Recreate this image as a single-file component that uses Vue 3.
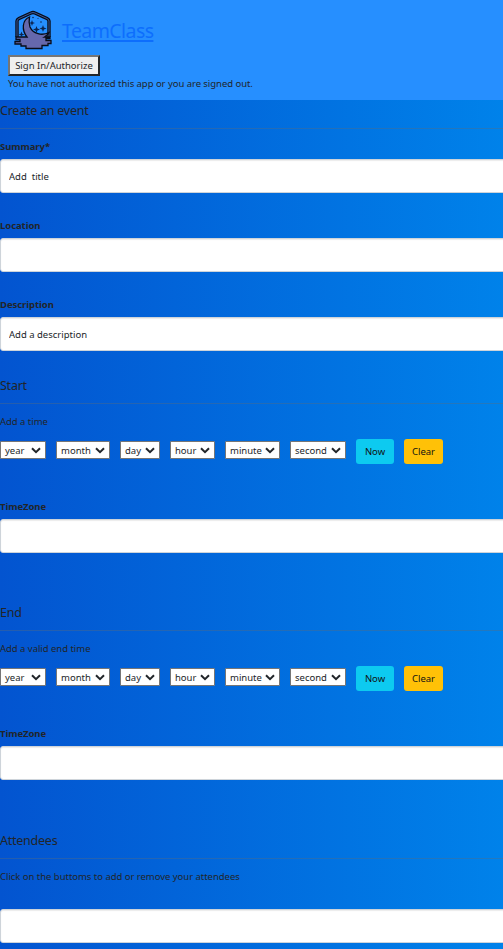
<script setup>
const parts = [
  { name: 'year', w: 46 },
  { name: 'month', w: 54 },
  { name: 'day', w: 40 },
  { name: 'hour', w: 45 },
  { name: 'minute', w: 55 },
  { name: 'second', w: 56 },
]
const times = [
  { title: 'Start', hint: 'Add a time' },
  { title: 'End', hint: 'Add a valid end time' },
]
const fields = [
  { label: 'Summary*', value: 'Add  title' },
  { label: 'Location', value: '' },
  { label: 'Description', value: 'Add a description' },
]
</script>

<template>
  <div class="page">
    <header class="top">
      <div class="brand">
        <svg class="logo" viewBox="0 0 50 50" width="50" height="50">
          <path d="M9 32V16Q9 14.500 11 13.500L23 8Q25 7 27 8L39 13.500Q41 14.500 41 16V32" fill="none" stroke="#080c18" stroke-width="3.400" />
          <path d="M9 32V16Q9 14.500 11 13.500L23 8Q25 7 27 8L39 13.500Q41 14.500 41 16V32" fill="none" stroke="#4a6cb8" stroke-width=".8" />
          <path d="M21.500 12C14 15 13.500 25 19 32H8V34.500H12V36.500H7V39H13V41H18V43.500H34V40.500H40V38.500H43V35.500H38V33.500H42V32H36.500Q40 30 41 27.500C34 31 25 29 22 22Q20.500 17 21.500 12Z" fill="#6668ac" stroke="#080c18" stroke-width="1.300" />
          <g fill="#0c2450">
            <path d="M24 15l.8 2.200 2.200.8-2.200.8L24 21l-.8-2.200L21 18l2.200-.8z" />
            <path d="M28.500 21l.9 2.600 2.600.9-2.600.9-.9 2.600-.9-2.600-2.600-.9 2.600-.9z" />
            <path d="M35 20l.9 2.600 2.600.9-2.600.9L35 27l-.9-2.600-2.600-.9 2.600-.9z" />
            <path d="M13.500 26.500l.8 2.200 2.200.8-2.200.8-.8 2.200-.8-2.200-2.200-.8 2.200-.8z" />
            <circle cx="25" cy="12.500" r=".8" /><circle cx="33" cy="17" r=".8" /><circle cx="30" cy="13.500" r=".5" />
          </g>
        </svg>
        <a class="name">TeamClass</a>
      </div>
      <button class="auth"><span>Sign In/Authorize</span></button>
      <p class="status"><span>You have not authorized this app or you are signed out.</span></p>
    </header>

    <main>
      <h2 class="first">Create an event</h2>
      <hr class="tight" />
      <div v-for="f in fields" :key="f.label" class="field">
        <label>{{ f.label }}</label>
        <input type="text" :value="f.value" />
      </div>

      <section v-for="t in times" :key="t.title" class="time">
        <h2>{{ t.title }}</h2>
        <hr />
        <p class="hint">{{ t.hint }}</p>
        <div class="row">
          <div v-for="p in parts" :key="p.name" class="pick" :style="{ width: p.w + 'px' }">
            <span>{{ p.name }}</span>
            <svg width="10" height="7" viewBox="0 0 10 7"><path d="M1 1.200L5 5.200L9 1.200" fill="none" stroke="#212529" stroke-width="2" /></svg>
          </div>
          <button class="btn now">Now</button>
          <button class="btn clear">Clear</button>
        </div>
        <div class="field">
          <label>TimeZone</label>
          <input type="text" />
        </div>
      </section>

      <section class="people">
        <h2>Attendees</h2>
        <hr />
        <p class="hint">Click on the buttoms to add or remove your attendees</p>
        <input type="text" />
      </section>
    </main>
  </div>
</template>

<style>
body {
  margin: 0;
  overflow: hidden;
}
</style>

<style scoped>
.page {
  height: 949px;
  overflow: hidden;
  background: linear-gradient(90deg, #0354d0, #0082ea);
  color: #212529;
  font-family: "Noto Sans", "Open Sans", sans-serif;
  font-size: 9.5px;
}
.top {
  box-sizing: border-box;
  height: 100px;
  padding: 5px 8px 0;
  background: #268fff;
}
.brand {
  display: flex;
  height: 50px;
}
.logo {
  display: block;
}
.name {
  margin-left: 4px;
  font-size: 19.5px;
  line-height: 52px;
  letter-spacing: -.58px;
  color: #0d6efd;
  text-decoration: underline;
  text-decoration-thickness: 2px;
  text-underline-offset: 2px;
}
.auth {
  display: block;
  box-sizing: border-box;
  width: 92px;
  height: 21px;
  padding: 0;
  border: 2px solid;
  border-color: #767676 #212529 #212529 #767676;
  background: #efefef;
  color: #212529;
  font: inherit;
  line-height: 17px;
  white-space: nowrap;
}
.status {
  margin: 0;
  line-height: 16px;
  letter-spacing: -.045px;
  white-space: nowrap;
}
h2 {
  margin: 0;
  font-size: 12.5px;
  font-weight: 400;
  line-height: 28px;
  letter-spacing: -.24px;
}
h2.first {
  line-height: 22px;
}
hr {
  height: 1px;
  margin: 3px 0 9px;
  border: 0;
  background: #5f6b75;
  opacity: .38;
}
hr.tight {
  margin: 6px 0;
}
.field {
  margin-bottom: 21px;
}
label {
  display: block;
  font-weight: 700;
  line-height: 24px;
  letter-spacing: -.06px;
}
input {
  display: block;
  box-sizing: border-box;
  width: 520px;
  height: 34px;
  padding: 0 8px;
  border: 1px solid #ced4da;
  border-radius: 3px;
  background: #fff;
  box-shadow: inset 0 1px 1px rgba(0, 0, 0, .08);
  color: #212529;
  font: inherit;
}
.hint {
  margin: 0;
  line-height: 18px;
  letter-spacing: -.03px;
  white-space: nowrap;
}
.row {
  display: flex;
  gap: 10px;
  height: 25px;
  margin: 8px 0 31px;
}
.pick {
  display: flex;
  box-sizing: border-box;
  align-items: center;
  justify-content: space-between;
  height: 18px;
  margin-top: 2px;
  padding: 0 4px;
  border: 1px solid #767676;
  border-radius: 1px;
  background: #fff;
  line-height: 16px;
}
.pick span {
  padding-top: 1px;
}
.btn {
  width: 38px;
  height: 25px;
  padding: 0;
  border: 0;
  border-radius: 3px;
  color: #111;
  font: inherit;
}
.now {
  background: #0dcaf0;
}
.clear {
  width: 39px;
  background: #ffc107;
}
.time + .time {
  padding-top: 25px;
}
.people {
  padding-top: 26px;
}
.people .hint {
  margin-bottom: 23px;
}
</style>
